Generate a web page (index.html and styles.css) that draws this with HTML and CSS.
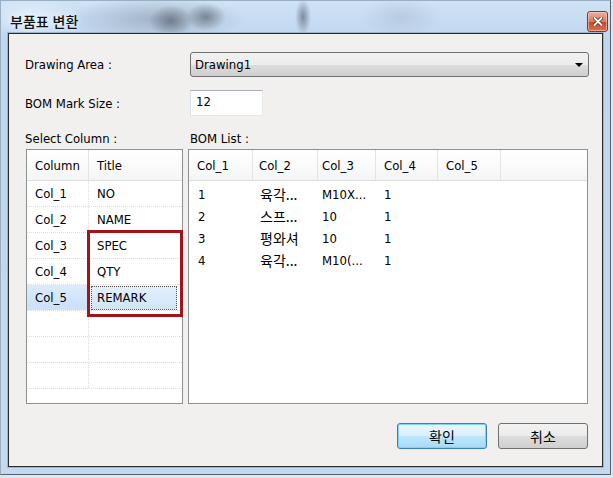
FILE: index.html
```html
<!DOCTYPE html>
<html lang="ko">

<head>
    <meta charset="UTF-8">
    <title>부품표 변환</title>
    <link rel="stylesheet" href="styles.css">
</head>

<body>
    <div class="window">
        <div class="titlebar">
            <span class="title">부품표 변환</span>
            <div class="close-btn">
                <svg width="10" height="9" viewBox="0 0 10 9">
                    <path d="M1.5 1 L8.5 8 M8.5 1 L1.5 8" stroke="#5a1a10" stroke-width="3.4" stroke-linecap="round"/>
                    <path d="M1.5 1 L8.5 8 M8.5 1 L1.5 8" stroke="#fff" stroke-width="2" stroke-linecap="round"/>
                </svg>
            </div>
        </div>

        <div class="client">
            <div class="field-row">
                <span class="label">Drawing Area :</span>
                <div class="combo">
                    <span>Drawing1</span>
                    <span class="combo-arrow"></span>
                </div>
            </div>

            <div class="field-row size-row">
                <span class="label">BOM Mark Size :</span>
                <div class="textbox">12</div>
            </div>

            <div class="field-row list-labels">
                <span class="label">Select Column :</span>
                <span class="label">BOM List :</span>
            </div>

            <div class="lists">
                <div class="listview column-list">
                    <div class="lv-head">
                        <div class="cell">Column</div>
                        <div class="cell">Title</div>
                    </div>
                    <div class="lv-row"><div class="cell">Col_1</div><div class="cell">NO</div></div>
                    <div class="lv-row"><div class="cell">Col_2</div><div class="cell">NAME</div></div>
                    <div class="lv-row"><div class="cell">Col_3</div><div class="cell">SPEC</div></div>
                    <div class="lv-row"><div class="cell">Col_4</div><div class="cell">QTY</div></div>
                    <div class="lv-row selected"><div class="cell">Col_5</div><div class="cell"><span class="focus">REMARK</span></div></div>
                    <div class="lv-row"><div class="cell"></div><div class="cell"></div></div>
                    <div class="lv-row"><div class="cell"></div><div class="cell"></div></div>
                    <div class="lv-row"><div class="cell"></div><div class="cell"></div></div>
                    <div class="callout"></div>
                </div>

                <div class="listview bom-list">
                    <div class="lv-head">
                        <div class="cell">Col_1</div>
                        <div class="cell">Col_2</div>
                        <div class="cell">Col_3</div>
                        <div class="cell">Col_4</div>
                        <div class="cell">Col_5</div>
                        <div class="cell last"></div>
                    </div>
                    <div class="bom-body">
                        <div class="bom-row"><span>1</span><span>육각...</span><span>M10X...</span><span>1</span></div>
                        <div class="bom-row"><span>2</span><span>스프...</span><span>10</span><span>1</span></div>
                        <div class="bom-row"><span>3</span><span>평와셔</span><span>10</span><span>1</span></div>
                        <div class="bom-row"><span>4</span><span>육각...</span><span>M10(...</span><span>1</span></div>
                    </div>
                </div>
            </div>

            <div class="buttons">
                <div class="btn default">확인</div>
                <div class="btn">취소</div>
            </div>
        </div>
    </div>
</body>

</html>
```

FILE: styles.css
```css
* {
    box-sizing: border-box;
    margin: 0;
    padding: 0;
}

body {
    width: 613px;
    height: 478px;
    background: #dfe6ec;
    font-family: 'DejaVu Sans Condensed', 'DejaVu Sans', 'Noto Sans CJK KR', sans-serif;
    font-size: 13px;
    color: #000;
    overflow: hidden;
}

.window {
    width: 611px;
    height: 475px;
    padding: 0 7px 7px 7px;
    border: 1px solid #56616e;
    border-left-color: #9aaec2;
    border-top-color: #9aaec2;
    background:
        radial-gradient(ellipse 22px 16px at 170px 20px, rgba(95, 105, 120, 0.75), transparent),
        radial-gradient(ellipse 20px 14px at 205px 16px, rgba(95, 105, 120, 0.7), transparent),
        radial-gradient(ellipse 8px 18px at 302px 16px, rgba(95, 105, 120, 0.7), transparent),
        radial-gradient(ellipse 90px 22px at 155px 18px, rgba(140, 152, 170, 0.6), transparent),
        radial-gradient(ellipse 40px 20px at 400px 16px, rgba(165, 180, 200, 0.45), transparent),
        radial-gradient(ellipse 50px 20px at 30px 16px, rgba(235, 243, 252, 0.8), transparent),
        linear-gradient(#cfe2f6, #bed6ef 40px, #c3d9f0);
    display: flex;
    flex-direction: column;
}

/* title bar */
.titlebar {
    height: 32px;
    display: flex;
    align-items: flex-end;
    justify-content: space-between;
    padding: 0 0 2px 2px;
}

.title {
    font-family: 'Noto Sans CJK KR', sans-serif;
    font-size: 14px;
    font-weight: 500;
    line-height: 20px;
    color: #111;
    text-shadow: 0 0 6px rgba(255, 255, 255, 0.9);
}

.close-btn {
    width: 21px;
    height: 21px;
    margin-right: -5px;
    margin-bottom: -1px;
    border: 1px solid #7a3b2e;
    border-radius: 3px;
    background: linear-gradient(#eab2a0, #d67a5f 50%, #c4472a 51%, #d9714e);
    display: flex;
    align-items: center;
    justify-content: center;
    box-shadow: inset 0 0 0 1px rgba(255, 220, 210, 0.5);
}

/* client area */
.client {
    flex: 1;
    border: 1px solid #2b2b2b;
    box-shadow: 0 0 0 1px #9fb3c8;
    background: #f1f0ef;
    padding: 18px 13px 17px 16px;
    display: flex;
    flex-direction: column;
}

.field-row {
    display: grid;
    grid-template-columns: 165px 1fr;
    align-items: center;
}

.label {
    white-space: nowrap;
}

.combo {
    height: 25px;
    border: 1px solid #707070;
    border-radius: 3px;
    background: linear-gradient(#f2f2f2, #ebebeb 50%, #dddddd 51%, #cfcfcf);
    display: flex;
    align-items: center;
    justify-content: space-between;
    padding: 0 5px 0 4px;
}

.combo-arrow {
    width: 0;
    height: 0;
    border-left: 4px solid transparent;
    border-right: 4px solid transparent;
    border-top: 4px solid #000;
    margin-top: 1px;
}

.size-row {
    margin-top: 13px;
}

.textbox {
    width: 73px;
    height: 26px;
    background: #fff;
    border: 1px solid #e3e9ef;
    border-top-color: #abadb3;
    border-left-color: #dbdfe6;
    padding: 3px 0 0 5px;
}

.list-labels {
    margin-top: 16px;
    height: 14px;
    line-height: 14px;
}

/* list views */
.lists {
    margin-top: 3px;
    margin-left: 1px;
    display: flex;
    gap: 5px;
    height: 255px;
}

.listview {
    position: relative;
    background: #fff;
    border: 1px solid #8e8f8f;
}

.column-list {
    width: 157px;
}

.bom-list {
    width: 400px;
}

.lv-head {
    height: 31px;
    display: flex;
    background: linear-gradient(#ffffff, #fbfbfb 50%, #f4f5f7);
    border-bottom: 1px solid #dedfe1;
}

.lv-head .cell {
    display: flex;
    align-items: center;
    padding-left: 8px;
    border-right: 1px solid #e3e4e6;
}

.column-list .cell:first-child {
    width: 62px;
    padding-left: 8px;
}

.column-list .cell:last-child {
    flex: 1;
    border-right: none;
}

.lv-row {
    height: 26px;
    display: flex;
    border-bottom: 1px dotted #dcdcdc;
}

.lv-row .cell {
    display: flex;
    align-items: center;
    padding-left: 8px;
    border-right: 1px dotted #dcdcdc;
}

.lv-row.selected .cell:first-child {
    background: linear-gradient(#dcebfc, #c9e0f7);
}

.focus {
    display: flex;
    align-items: center;
    height: 24px;
    margin-left: -6px;
    padding-left: 5px;
    width: 86px;
    border: 1px dotted #555;
    background: linear-gradient(#e3effb, #d2e5f8);
}

.callout {
    position: absolute;
    left: 60px;
    top: 80px;
    width: 96px;
    height: 87px;
    border: 3px solid #a3141a;
}

.bom-list .lv-head .cell:nth-child(1) { width: 64px; padding-left: 8px; }
.bom-list .lv-head .cell:nth-child(2) { width: 65px; padding-left: 6px; }
.bom-list .lv-head .cell:nth-child(3) { width: 58px; padding-left: 4px; }
.bom-list .lv-head .cell:nth-child(4) { width: 62px; padding-left: 8px; }
.bom-list .lv-head .cell:nth-child(5) { width: 63px; padding-left: 8px; }

.bom-list .lv-head .cell.last {
    flex: 1;
    border-right: none;
}

.bom-body {
    padding-top: 2px;
}

.bom-row {
    height: 22px;
    display: grid;
    grid-template-columns: 64px 65px 58px 62px;
    align-items: center;
}

.bom-row span {
    padding-left: 9px;
    white-space: nowrap;
}

.bom-row span:nth-child(2) {
    padding-left: 7px;
    font-family: 'Noto Sans CJK KR', sans-serif;
    font-size: 14px;
}

.bom-row span:nth-child(3) {
    padding-left: 4px;
}

.bom-row span:nth-child(4) {
    padding-left: 8px;
}

/* buttons */
.buttons {
    margin-top: 19px;
    display: flex;
    justify-content: flex-end;
    gap: 11px;
    padding-right: 1px;
}

.btn {
    width: 90px;
    height: 26px;
    border: 1px solid #707070;
    border-radius: 3px;
    background: linear-gradient(#f2f2f2, #ebebeb 50%, #dddddd 51%, #cfcfcf);
    font-family: 'Noto Sans CJK KR', sans-serif;
    font-size: 14px;
    display: flex;
    align-items: center;
    justify-content: center;
}

.btn.default {
    border-color: #3c7fb1;
    background: linear-gradient(#eaf6fd, #d9f0fc 50%, #bee6fd 51%, #a7d9f5);
    box-shadow: inset 0 0 0 1px #7fd3f7;
}
```
